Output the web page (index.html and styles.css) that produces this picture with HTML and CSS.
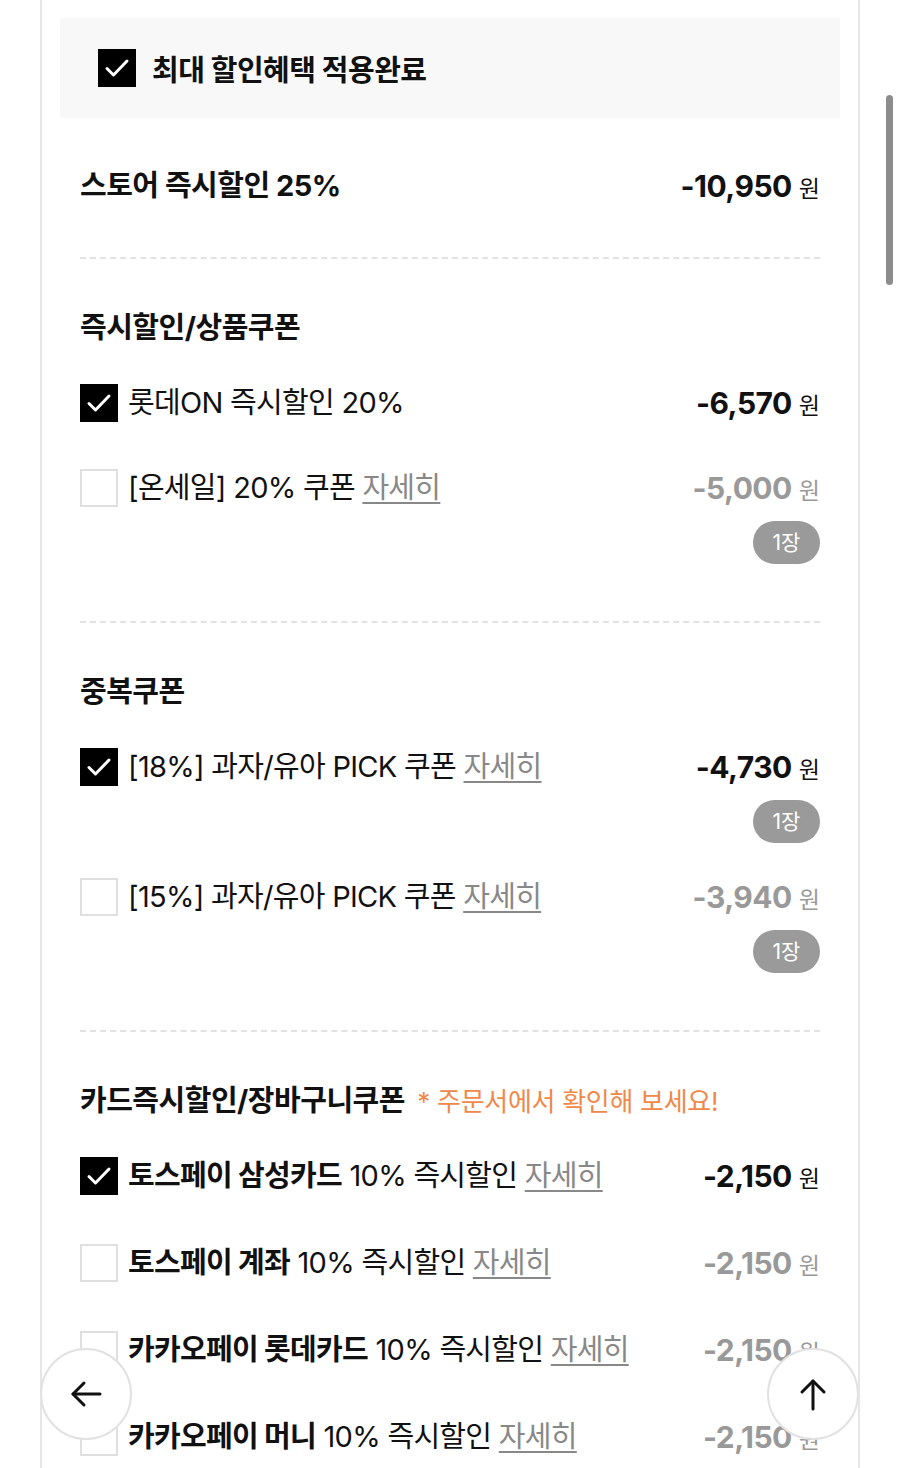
FILE: index.html
```html
<!DOCTYPE html>
<html lang="ko">
<head>
    <meta charset="UTF-8">
    <meta name="viewport" content="width=device-width, initial-scale=1.0">
    <title>할인혜택</title>
    <link rel="stylesheet" href="styles.css">
</head>
<body>

    <div class="page">
        <div class="max-box">
            <span class="check on"></span>
            <span class="max-text">최대 할인혜택 적용완료</span>
        </div>

        <div class="store-row">
            <span class="title">스토어 즉시할인 25%</span>
            <span class="amount">-10,950<small>원</small></span>
        </div>

        <div class="divider"></div>

        <div class="section">
            <h2 class="title">즉시할인/상품쿠폰</h2>
            <div class="item">
                <div class="item-left">
                    <span class="check on"></span>
                    <span class="label">롯데ON 즉시할인 20%</span>
                </div>
                <div class="item-right">
                    <span class="amount">-6,570<small>원</small></span>
                </div>
            </div>
            <div class="item has-badge">
                <div class="item-left">
                    <span class="check"></span>
                    <span class="label">[온세일] 20% 쿠폰 <a class="more">자세히</a></span>
                </div>
                <div class="item-right">
                    <span class="amount off">-5,000<small>원</small></span>
                    <span class="badge">1장</span>
                </div>
            </div>
        </div>

        <div class="divider"></div>

        <div class="section">
            <h2 class="title">중복쿠폰</h2>
            <div class="item has-badge">
                <div class="item-left">
                    <span class="check on"></span>
                    <span class="label">[18%] 과자/유아 PICK 쿠폰 <a class="more">자세히</a></span>
                </div>
                <div class="item-right">
                    <span class="amount">-4,730<small>원</small></span>
                    <span class="badge">1장</span>
                </div>
            </div>
            <div class="item has-badge">
                <div class="item-left">
                    <span class="check"></span>
                    <span class="label">[15%] 과자/유아 PICK 쿠폰 <a class="more">자세히</a></span>
                </div>
                <div class="item-right">
                    <span class="amount off">-3,940<small>원</small></span>
                    <span class="badge">1장</span>
                </div>
            </div>
        </div>

        <div class="divider"></div>

        <div class="section cards">
            <h2 class="title">카드즉시할인/장바구니쿠폰 <span class="notice">* 주문서에서 확인해 보세요!</span></h2>
            <div class="item">
                <div class="item-left">
                    <span class="check on"></span>
                    <span class="label"><b>토스페이 삼성카드</b> 10% 즉시할인 <a class="more">자세히</a></span>
                </div>
                <div class="item-right">
                    <span class="amount">-2,150<small>원</small></span>
                </div>
            </div>
            <div class="item">
                <div class="item-left">
                    <span class="check"></span>
                    <span class="label"><b>토스페이 계좌</b> 10% 즉시할인 <a class="more">자세히</a></span>
                </div>
                <div class="item-right">
                    <span class="amount off">-2,150<small>원</small></span>
                </div>
            </div>
            <div class="item">
                <div class="item-left">
                    <span class="check"></span>
                    <span class="label"><b>카카오페이 롯데카드</b> 10% 즉시할인 <a class="more">자세히</a></span>
                </div>
                <div class="item-right">
                    <span class="amount off">-2,150<small>원</small></span>
                </div>
            </div>
            <div class="item">
                <div class="item-left">
                    <span class="check"></span>
                    <span class="label"><b>카카오페이 머니</b> 10% 즉시할인 <a class="more">자세히</a></span>
                </div>
                <div class="item-right">
                    <span class="amount off">-2,150<small>원</small></span>
                </div>
            </div>
        </div>
    </div>

    <!-- floating buttons -->
    <button class="float-btn back" aria-label="뒤로">
        <svg width="40" height="40" viewBox="0 0 40 40" fill="none" stroke="#111" stroke-width="3" stroke-linecap="round" stroke-linejoin="round">
            <path d="M34 20H7"/>
            <path d="M18 9L7 20L18 31"/>
        </svg>
    </button>
    <button class="float-btn top" aria-label="위로">
        <svg width="40" height="40" viewBox="0 0 40 40" fill="none" stroke="#111" stroke-width="3" stroke-linecap="round" stroke-linejoin="round">
            <path d="M20 35V7"/>
            <path d="M9 18L20 7L31 18"/>
        </svg>
    </button>

    <div class="scrollbar"></div>

</body>
</html>
```

FILE: styles.css
```css
body {
    margin: 0;
    background-color: #fff;
    color: #111;
    font-family: 'Inter', 'Noto Sans CJK KR', sans-serif;
    overflow: hidden;
    height: 1468px;
}

.page {
    width: 820px;
    margin-left: 40px;
    border-left: 2px solid #e6e6e6;
    border-right: 2px solid #e6e6e6;
    min-height: 1468px;
    padding-top: 18px;
    box-sizing: border-box;
}

.max-box {
    margin: 0 18px;
    height: 100px;
    background-color: #f8f8f8;
    display: flex;
    align-items: center;
    padding-left: 38px;
    gap: 16px;
}

.max-text {
    font-size: 29px;
    font-weight: 700;
    letter-spacing: -0.5px;
}

.check {
    width: 38px;
    height: 38px;
    box-sizing: border-box;
    border: 2px solid #e0e0e0;
    background-color: #fff;
    flex-shrink: 0;
    display: inline-block;
}

.check.on {
    border: none;
    background-color: #000;
    background-image: url("data:image/svg+xml,%3Csvg xmlns='http://www.w3.org/2000/svg' viewBox='0 0 38 38'%3E%3Cpath d='M9 19.5l6.5 6.5L29 12' fill='none' stroke='%23fff' stroke-width='3' stroke-linecap='round' stroke-linejoin='round'/%3E%3C/svg%3E");
}

.title {
    margin: 0;
    font-size: 29px;
    font-weight: 700;
    letter-spacing: -0.5px;
    line-height: 38px;
    height: 38px;
    white-space: nowrap;
}

.store-row {
    display: flex;
    justify-content: space-between;
    align-items: center;
    height: 38px;
    margin: 49px 38px 52px;
}

.amount {
    display: flex;
    align-items: baseline;
    height: 38px;
    font-size: 30px;
    font-weight: 700;
    line-height: 38px;
    letter-spacing: -0.5px;
    white-space: nowrap;
}

.amount small {
    font-size: 23px;
    font-weight: 400;
    margin-left: 7px;
    letter-spacing: 0;
}

.amount.off {
    color: #999;
}

.divider {
    border-top: 2px dashed #e2e2e2;
    margin: 0 38px;
}

.section {
    padding: 50px 38px 57px;
}

.section .title {
    margin-bottom: 37px;
}

.notice {
    font-size: 26px;
    font-weight: 400;
    letter-spacing: -0.3px;
    color: #f0884a;
    margin-left: 6px;
}

.item {
    display: flex;
    justify-content: space-between;
    align-items: flex-start;
    margin-bottom: 47px;
}

.cards .item {
    margin-bottom: 49px;
}

.item.has-badge {
    margin-bottom: 35px;
}

.section .item:last-child {
    margin-bottom: 0;
}

.item-left {
    display: flex;
    align-items: center;
    gap: 10px;
    height: 38px;
}

.label {
    font-size: 29px;
    line-height: 38px;
    letter-spacing: -0.7px;
    white-space: nowrap;
}

.label b {
    font-weight: 700;
}

.more {
    color: #888;
    text-decoration: underline;
    text-underline-offset: 4px;
    text-decoration-thickness: 2px;
}

.item-right {
    display: flex;
    flex-direction: column;
    align-items: flex-end;
}

.badge {
    margin-top: 14px;
    width: 67px;
    height: 43px;
    border-radius: 22px;
    background-color: #9a9a9a;
    color: #fff;
    font-size: 21px;
    line-height: 43px;
    text-align: center;
}

.float-btn {
    position: fixed;
    top: 1348px;
    width: 92px;
    height: 92px;
    border-radius: 50%;
    border: 2px solid #e2e2e2;
    background-color: #fff;
    display: flex;
    align-items: center;
    justify-content: center;
    padding: 0;
}

.float-btn.back {
    left: 40px;
}

.float-btn.top {
    left: 767px;
}

.scrollbar {
    position: fixed;
    left: 886px;
    top: 95px;
    width: 7px;
    height: 190px;
    border-radius: 4px;
    background-color: #8c8c8c;
}
```
